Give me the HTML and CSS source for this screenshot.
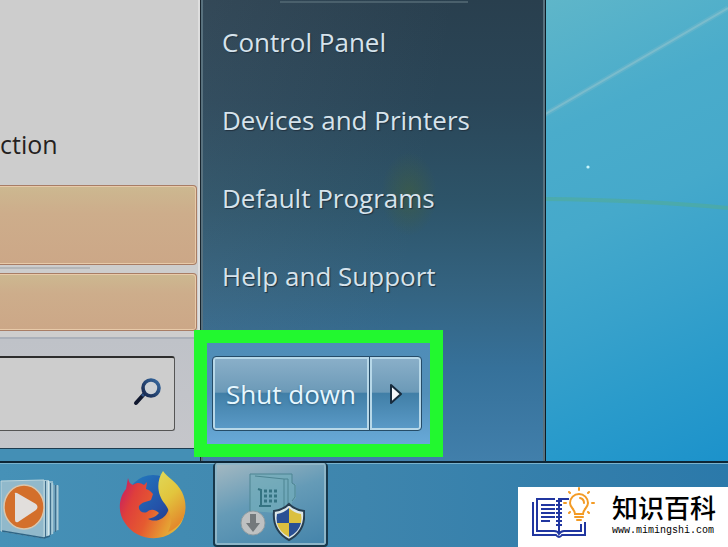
FILE: index.html
```
<!DOCTYPE html>
<html lang="en">
<head>
  <meta charset="UTF-8">
  <meta name="viewport" content="width=device-width, initial-scale=1.0">
  <title>Start menu</title>
  <link rel="stylesheet" href="styles.css">
</head>
<body>

  <main class="desktop">
    <svg class="wallpaper" viewBox="0 0 184 461" preserveAspectRatio="none" aria-hidden="true">
      <path d="M0 115 L184 8" stroke="#8fc0cb" stroke-width="5" opacity=".25"/>
      <path d="M0 115 L184 8" stroke="#a3cbd0" stroke-width="2" opacity=".4"/>
      <path d="M0 199 Q100 200 184 208" fill="none" stroke="#4fab9e" stroke-width="4" opacity=".7"/>
      <circle cx="44" cy="167" r="1.6" fill="#c8f4fa"/>
    </svg>

    <section class="start-menu">
      <div class="programs">
        <div class="program-list">
          <a class="program" href="#">ction</a>
          <a class="tile tile-large" href="#" aria-label="Program"></a>
          <hr class="program-line">
          <a class="tile" href="#" aria-label="All programs"></a>
        </div>
        <form class="search-area">
          <div class="search-box">
            <input type="search" aria-label="Search programs and files">
            <svg width="28" height="28" viewBox="0 0 28 28" aria-hidden="true">
              <defs>
                <linearGradient id="lens" x1="1" y1="0" x2="0" y2="1">
                  <stop offset="0" stop-color="#3568a0"/>
                  <stop offset="1" stop-color="#16264c"/>
                </linearGradient>
              </defs>
              <path d="M3 25 L12 15" stroke="#10182f" stroke-width="4" stroke-linecap="round"/>
              <path d="M9 18 L13 14" stroke="#2c5288" stroke-width="3"/>
              <circle cx="18" cy="10" r="8" fill="#ccd1d6" stroke="url(#lens)" stroke-width="3.6"/>
            </svg>
          </div>
        </form>
      </div>

      <div class="places">
        <hr class="places-line">
        <nav class="places-list">
          <a href="#">Control Panel</a>
          <a href="#">Devices and Printers</a>
          <a href="#">Default Programs</a>
          <a href="#">Help and Support</a>
        </nav>
        <div class="highlight">
          <div class="power">
            <button type="button" class="power-main">Shut down</button>
            <button type="button" class="power-more" aria-label="More power options">
              <svg width="14" height="22" viewBox="0 0 14 22" aria-hidden="true">
                <path d="M2 2 L12 11 L2 20 Z" fill="#f4f6fa" stroke="#172b3d" stroke-width="2" stroke-linejoin="round"/>
              </svg>
            </button>
          </div>
        </div>
      </div>
    </section>
  </main>

  <footer class="taskbar">
    <button type="button" class="task media" aria-label="Windows Media Player">
      <svg width="64" height="64" viewBox="0 0 64 64" aria-hidden="true">
        <path d="M50 8 L59 10 V54 L50 57 Z" fill="#6da0bb"/>
        <path d="M46 5 H53 V58 L46 60 Z" fill="#91bbcd"/>
        <path d="M52.500 7 V58 M57.500 9 V54" stroke="#a9cbd8" stroke-width="1.500"/>
        <path d="M43 4 H49 V60 L43 61 Z" fill="#a3c6d5"/>
        <path d="M48.500 5 V60" stroke="#d4e8ec" stroke-width="1.500"/>
        <path d="M45.500 5 V61 M50.500 7 V59 M55.500 9 V56" stroke="#416f8c"/>
        <path d="M1 5 L44 4 V62 L1 55 Z" fill="#91b9cb" stroke="#bdd6dd"/>
        <path d="M2 55 L44 62 L50 60" fill="none" stroke="#2f6585" stroke-width="1.500"/>
        <ellipse cx="24" cy="31" rx="20" ry="22" fill="#d36f2b" stroke="#d9c6ad" stroke-width="1.500"/>
        <path d="M15 18 Q14 16 17 17 L36 28 Q39 31 36 34 L18 46 Q15 47 15 44 Z" fill="#e1dedc"/>
      </svg>
    </button>
    <button type="button" class="task" aria-label="Firefox">
      <svg width="70" height="72" viewBox="0 0 70 72" aria-hidden="true">
        <defs>
          <linearGradient id="foxBody" x1="0" y1=".25" x2="1" y2=".65">
            <stop offset="0" stop-color="#c9245d"/>
            <stop offset=".2" stop-color="#df3f3b"/>
            <stop offset=".5" stop-color="#e55a30"/>
            <stop offset=".8" stop-color="#e69a32"/>
            <stop offset="1" stop-color="#dfbd40"/>
          </linearGradient>
          <linearGradient id="foxTail" x1="0" y1="0" x2=".4" y2="1">
            <stop offset="0" stop-color="#e0d958"/>
            <stop offset=".5" stop-color="#e2c53d"/>
            <stop offset="1" stop-color="#e38a2d"/>
          </linearGradient>
          <linearGradient id="globe" x1="0" y1="0" x2="1" y2="1">
            <stop offset="0" stop-color="#217fc1"/>
            <stop offset=".6" stop-color="#2451a8"/>
            <stop offset="1" stop-color="#252d72"/>
          </linearGradient>
        </defs>
        <circle cx="35" cy="33" r="27" fill="url(#globe)"/>
        <path d="M10 9 C11 13 12 15 15 16 C19 13 23 14 26 16 L29 13 L28 20 C32 21 33 23 35 25 L33 31 C28 33 24 33 21 37 C20 41 24 45 29 43 C33 39 38 41 41 44 C38 48 33 49 30 50 C38 54 47 50 50 42 C53 33 56 22 60 20 C70 35 69 53 55 63 C40 74 17 70 7 54 C-1 43 1 28 8 20 Z" fill="url(#foxBody)"/>
        <path d="M45 2 C49 8 59 13 64 23 C72 40 66 57 50 63 C55 53 53 43 47 35 C39 26 38 12 45 2 Z" fill="url(#foxTail)"/>
      </svg>
    </button>
    <button type="button" class="task task-active" aria-label="Installer">
      <svg width="68" height="72" viewBox="0 0 68 72" aria-hidden="true">
        <path d="M13 40 V3 H55 V13 H59 V27 L55 31 V38 L40 42 Z" fill="#74aeba" opacity=".7"/>
        <path d="M13 40 V3 H55 V12 L58 14 V26 L55 30 M18 5 L47 8 V36 M47 8 H51 V34" fill="none" stroke="#4d8492"/>
        <path d="M21 18 L24 19 V34 M22 35 H34" fill="none" stroke="#347382" stroke-width="2"/>
        <path d="M27 20 H40 M27 25 H40 M27 30 H40" fill="none" stroke="#347382" stroke-width="3" stroke-dasharray="3 2"/>
        <circle cx="16" cy="52" r="12" fill="#bfc1c2" stroke="#8d9ba1"/>
        <path d="M13 43 H19 V52 H23 L16 61 L9 52 H13 Z" fill="#74797c"/>
        <path d="M52 33 Q58 39 67 40 Q69 60 52 69 Q35 60 37 40 Q46 39 52 33 Z" fill="#dce6e8" stroke="#263e51" stroke-width="2"/>
        <path d="M52 37 V52 H40 Q39 47 40 43 Q47 42 52 37 Z M52 52 H64 Q62 61 52 66 Z" fill="#2a5094"/>
        <path d="M52 37 Q57 42 64 43 Q65 47 64 52 H52 Z M40 52 H52 V66 Q42 61 40 52 Z" fill="#dbc03f"/>
      </svg>
    </button>
  </footer>

  <aside class="site-badge">
    <svg width="66" height="50" viewBox="0 0 66 50" aria-hidden="true">
      <g fill="none" stroke="#2136a0" stroke-width="2">
        <path d="M3 10 V43 H26 Q29 47 32 43 H55 V30 M25 7 H7 V39 H24 Q28 39 29 42 Q31 39 34 39 H51 V32 M39 7 H30"/>
        <path d="M11 13 H25 M11 17 H25 M11 21 H25 M11 25 H25 M11 29 H20"/>
        <path d="M29 6 V40"/>
        <path d="M26 9 H32 M26 13 H32 M26 17 H32 M26 21 H32 M26 25 H32 M26 29 H32 M26 33 H32"/>
      </g>
      <g fill="none" stroke="#f39b25" stroke-width="2" stroke-linecap="round">
        <path d="M45 22 C45 17 40 16 40 11 A9 9 0 0 1 58 11 C58 16 53 17 53 22 Z" fill="#fff"/>
        <path d="M45 25 H53 M47 28 H51 M50 6 Q54 7 54 11 M49 -4 V-2 M39 0 L40 1 M59 0 L58 1 M34 11 H36 M62 11 H64 M39 21 L40 20 M59 21 L58 20"/>
      </g>
    </svg>
    <div class="site-text">
      <strong lang="zh">知识百科</strong>
      <span>www.mimingshi.com</span>
    </div>
  </aside>

</body>
</html>
```
FILE: styles.css
```
* {
  box-sizing: border-box;
}

body {
  display: flex;
  flex-direction: column;
  min-height: 100vh;
  margin: 0;
  overflow: hidden;
  font-family: "Open Sans", "Noto Sans", sans-serif;
  font-size: 26px;
}

button {
  font: inherit;
  padding: 0;
  border: none;
  background: none;
}

a {
  color: inherit;
  text-decoration: none;
}

hr {
  margin: 0;
  border: none;
}

/* --- Desktop --- */
.desktop {
  position: relative;
  display: flex;
  flex: 1;
  background: #45aaca;
}

.wallpaper {
  position: absolute;
  top: 0;
  right: 0;
  width: 184px;
  height: 100%;
  background: linear-gradient(155deg, #5fb6c9, #4aaccb 25%, #45a9cb 45%, #37a1cb 65%, #2a9bcb 80%, #1c92cb);
}

/* --- Start menu --- */
.start-menu {
  position: relative;
  display: grid;
  grid-template-columns: 200px 1fr;
  width: 75%;
  min-width: 545px;
}

.programs {
  display: flex;
  flex-direction: column;
  margin-bottom: 12px;
  background: #cdcdcd;
  border-right: 2px solid #dedede;
  border-bottom: 1px solid #1d3c50;
  box-shadow: 0 12px #448fb5;
}

.program-list {
  display: flex;
  flex: 1;
  flex-direction: column;
  justify-content: flex-end;
  padding-right: 1px;
  padding-bottom: 6px;
}

.program {
  margin-bottom: 24px;
  font-size: 25px;
  line-height: 34px;
  color: #251f20;
}

.tile {
  height: 58px;
  border: 1px solid #a87d65;
  border-left: none;
  border-radius: 0 4px 4px 0;
  background: linear-gradient(#ccb890, #cdad8b 35%, #cca787);
  box-shadow: inset -1px 1px #e8caa9, inset 0 -1px #e8caa9;
}

.tile-large {
  height: 80px;
}

.program-line {
  width: 90px;
  height: 2px;
  margin: 2px 0 4px;
  background: #b4b6b8;
}

.search-area {
  margin: 0;
  padding: 17px 23px 17px 0;
  border-top: 2px solid #aab0b9;
  background: linear-gradient(#bfc2c8, #c5c6ca);
}

.search-box {
  display: flex;
  align-items: center;
  height: 75px;
  padding-right: 13px;
  padding-bottom: 4px;
  border: 1px solid #555;
  border-top: 2px solid #2d2d2d;
  border-left: none;
  border-radius: 0 3px 3px 0;
  background: #cdcdcd;
}

.search-box input {
  flex: 1;
  min-width: 0;
  height: 100%;
  border: none;
  background: transparent;
  font: inherit;
}

.places {
  display: flex;
  flex-direction: column;
  justify-content: flex-end;
  border-right: 1px solid #0c1c26;
  border-left: 1px solid #17242d;
  box-shadow: inset 2px 0 #58717e, inset -2px 0 #58717e;
  background:
    radial-gradient(ellipse 28px 42px at 208px 194px, rgba(64, 93, 65, .65), transparent),
    linear-gradient(100deg, rgba(115, 130, 145, .14), transparent 60%),
    linear-gradient(#293f4e, #2a4658 22%, #2d5469 44%, #346482 64%, #36719a 80%, #417fab);
}

.places-line {
  width: 188px;
  height: 2px;
  margin: 0 auto 0 79px;
  background: #4a606c;
}

.places-list {
  padding-left: 21px;
  color: #d6e3ec;
  text-shadow: 1px 1px 1px #21313f;
}

.places-list a {
  display: block;
  line-height: 78px;
}

/* frame round the power buttons */
.highlight {
  z-index: 1;
  align-self: flex-start;
  margin: 15px 0 4px -7px;
  padding: 13px 8px 13px 5px;
  border: 13px solid #22f82f;
  background: linear-gradient(#4f8db8, #528fb9 50%, #68a9d8);
}

.power {
  display: flex;
}

.power button {
  height: 75px;
  border: 1px solid #254c68;
  border-radius: 4px;
  background: linear-gradient(#8bb0c9, #6c9ab8 48%, #417fa7 50%, #5b9bc8);
  box-shadow: inset 0 0 0 2px #b7d8e8;
}

.power .power-main {
  width: 158px;
  border-radius: 4px 0 0 4px;
  color: #e6f7ff;
  text-shadow: 0 1px 2px #32617f;
}

.power .power-more {
  display: flex;
  align-items: center;
  justify-content: center;
  width: 53px;
  margin-left: -1px;
  border-radius: 0 4px 4px 0;
}

/* --- Taskbar --- */
.taskbar {
  display: flex;
  height: 86px;
  border-top: 2px solid #0d2636;
  box-shadow: inset 0 1px #79b3ce;
  background: linear-gradient(90deg, #4691b7, #3e85ad 50%, #2b79aa);
}

.task {
  display: flex;
  align-items: center;
  justify-content: center;
  width: 96px;
}

.media {
  justify-content: flex-start;
  width: 105px;
  padding-top: 6px;
}

.task-active {
  width: 115px;
  margin-left: 12px;
  padding-top: 6px;
  border: 2px solid #17384b;
  border-top: none;
  border-radius: 4px;
  background: linear-gradient(160deg, #a5b9c2, #659bb7 45%, #4383aa);
  box-shadow: inset 0 0 0 2px #8db5c7;
}

/* --- Site badge --- */
.site-badge {
  position: absolute;
  right: 0;
  bottom: 0;
  display: flex;
  align-items: center;
  gap: 16px;
  width: 210px;
  height: 60px;
  padding-left: 12px;
  background: #fff;
}

.site-badge svg {
  overflow: visible;
}

.site-text {
  display: flex;
  flex-direction: column;
  color: #000;
}

.site-text strong {
  font: 500 26px/28px "Noto Sans CJK SC", sans-serif;
}

.site-text span {
  font: 10px/20px "Liberation Mono", monospace;
}
```
